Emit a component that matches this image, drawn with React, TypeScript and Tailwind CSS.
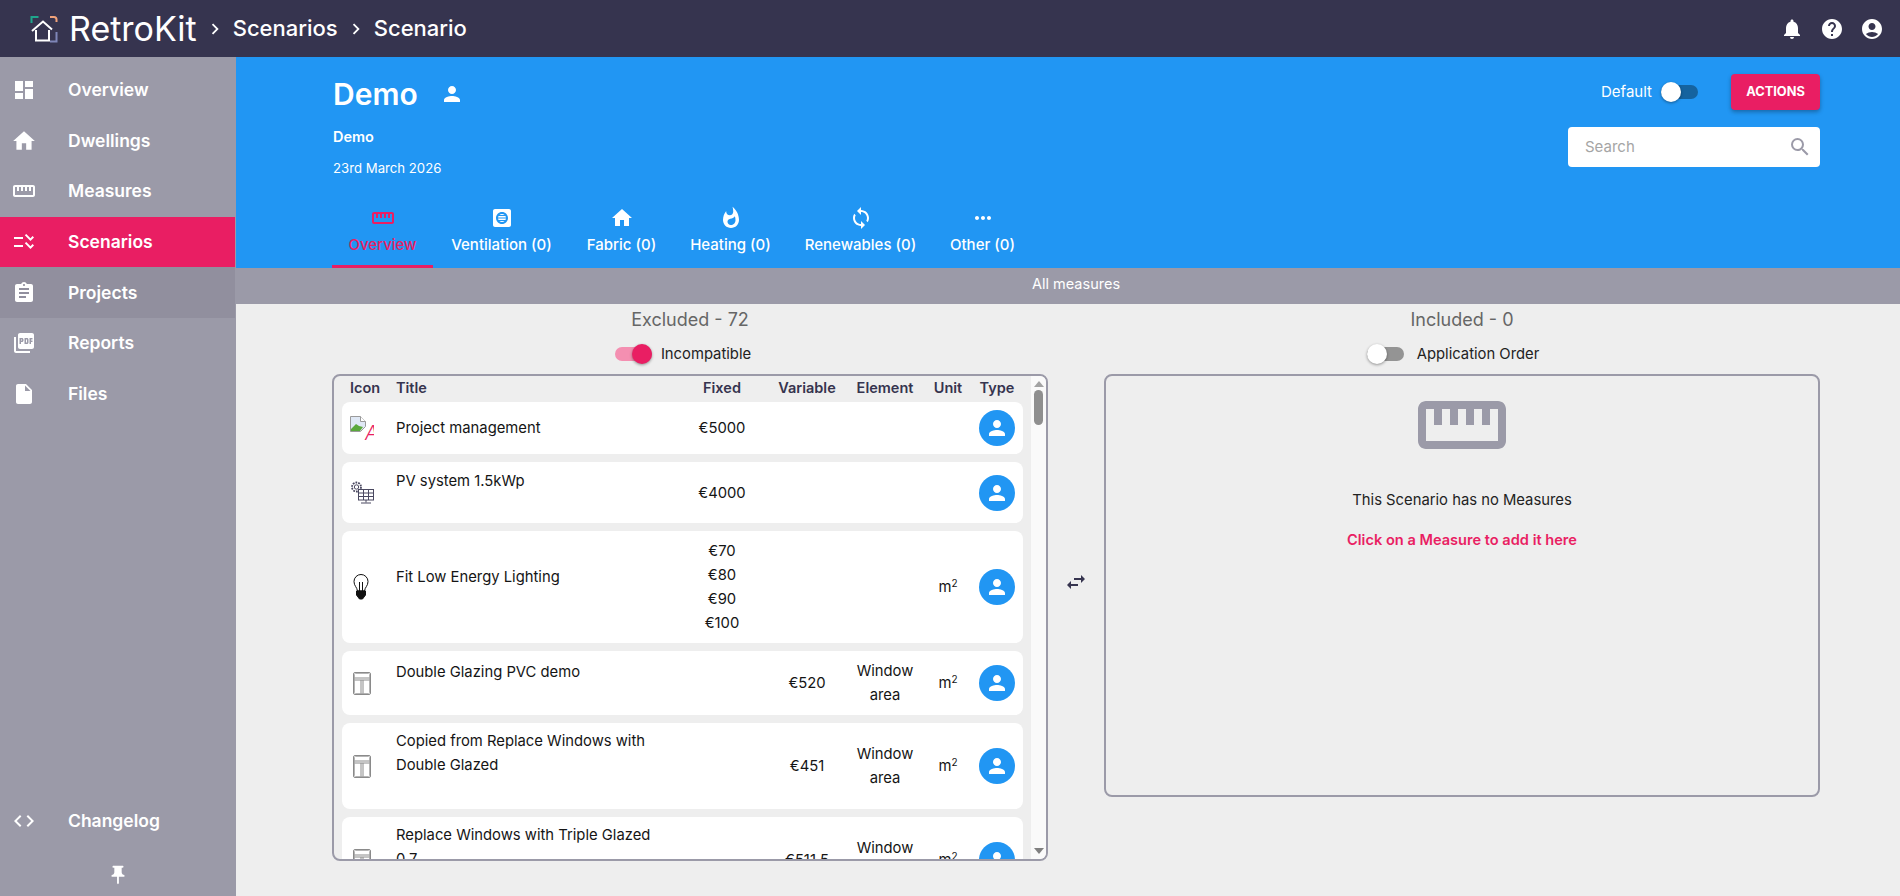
import {
  MdAccountCircle,
  MdAssignment,
  MdChecklist,
  MdCode,
  MdDashboard,
  MdHelp,
  MdHome,
  MdHvac,
  MdInsertDriveFile,
  MdMoreHoriz,
  MdNavigateNext,
  MdNotifications,
  MdPerson,
  MdPictureAsPdf,
  MdPushPin,
  MdSearch,
  MdStraighten,
  MdSwapHoriz,
  MdSync,
  MdWhatshot,
} from "react-icons/md";
import type { ReactNode } from "react";

const navItems = [
  { label: "Overview", icon: <MdDashboard size={24} />, cls: "" },
  { label: "Dwellings", icon: <MdHome size={26} />, cls: "" },
  { label: "Measures", icon: <MdStraighten size={24} />, cls: "" },
  { label: "Scenarios", icon: <MdChecklist size={24} className="-scale-x-100" />, cls: "bg-[#e91e63]" },
  { label: "Projects", icon: <MdAssignment size={24} />, cls: "bg-[#918f9e]" },
  { label: "Reports", icon: <MdPictureAsPdf size={24} />, cls: "" },
  { label: "Files", icon: <MdInsertDriveFile size={24} />, cls: "" },
];

const tabs = [
  { label: "Overview", icon: <MdStraighten size={24} />, cls: "w-[101px] border-[#e91e63] text-[#e91e63]" },
  { label: "Ventilation (0)", icon: <MdHvac size={24} />, cls: "w-[137px] border-transparent text-white" },
  { label: "Fabric (0)", icon: <MdHome size={24} />, cls: "w-[103px] border-transparent text-white" },
  { label: "Heating (0)", icon: <MdWhatshot size={24} />, cls: "w-[115px] border-transparent text-white" },
  { label: "Renewables (0)", icon: <MdSync size={24} />, cls: "w-[145px] border-transparent text-white" },
  { label: "Other (0)", icon: <MdMoreHoriz size={24} />, cls: "w-[99px] border-transparent text-white" },
];

function Logo() {
  return (
    <svg width="28" height="28" viewBox="0 0 28 28" fill="none">
      <path d="M1.500 8V2h7" stroke="#1fa58c" strokeWidth="2" />
      <path d="M20 2h4a2.500 2.500 0 0 1 2.500 2.500V7" stroke="#f0a27a" strokeWidth="2" />
      <path d="M26.500 17v9.500H20" stroke="#7f86b8" strokeWidth="2" />
      <path d="M2 16 13 6.500 22 14.500" stroke="#fff" strokeWidth="2" />
      <path d="M6 15v10.500h13V15" stroke="#fff" strokeWidth="2" />
    </svg>
  );
}

function BrokenImage() {
  return (
    <div className="relative w-6 h-6 self-start mt-[14px] overflow-hidden">
      <svg width="16" height="16" viewBox="0 0 16 16" className="absolute left-0 top-0">
        <path d="M.5.500h10l5 5v5l-5 5h-10z" fill="#dfe8f5" stroke="#9a9a9a" />
        <path d="M1 13 6 8l3 2 4 1-3 4H1z" fill="#5aa83c" />
        <path d="M10.500.500v5h5" fill="#fff" stroke="#9a9a9a" />
      </svg>
      <span className="absolute left-[15px] top-[5px] text-[20px] leading-[24px] font-light italic text-[#e91e63]">
        A
      </span>
    </div>
  );
}

function SolarIcon() {
  return (
    <svg width="25" height="25" viewBox="0 0 25 25" fill="none" stroke="#4a4860" strokeWidth="1">
      <circle cx="6.500" cy="7" r="2.200" />
      <circle cx="6.500" cy="7" r="4.500" strokeDasharray="1.800 1" strokeWidth="1.800" />
      <rect x="8.500" y="9.500" width="15" height="10.500" fill="#fff" />
      <path d="M8.500 13h15M8.500 16.500h15M13.500 9.500V20M18.500 9.500V20M16 20v2.500M11 23h10" />
    </svg>
  );
}

function BulbIcon() {
  return (
    <svg width="16" height="26" viewBox="0 0 16 26" fill="none" stroke="#111" strokeWidth="1">
      <path d="M4.500 17C4 13 1 12 1 7.500a7 7 0 0 1 14 0C15 12 12 13 11.500 17z" />
      <path d="M6.500 17V8M9.500 17V8" />
      <path d="M3.500 17h9v4l-3 4h-3l-3-4z" fill="#111" />
    </svg>
  );
}

function WindowIcon() {
  return (
    <svg width="18" height="23" viewBox="0 0 18 23" fill="none" stroke="#8a8a8a" strokeWidth="1">
      <rect x="0.500" y="0.500" width="17" height="22" rx="1.500" />
      <rect x="1.500" y="1.500" width="15" height="20" rx="1" stroke="#b5b5b5" />
      <path d="M1.500 6h15M1.500 8h15M8 8v13.500M10 8v13.500" />
    </svg>
  );
}

function Toggle({ track, thumb, on }: { track: string; thumb: string; on?: boolean }) {
  return (
    <div className="relative w-[37px] h-5 shrink-0 flex items-center">
      <div className={`w-full h-[14px] rounded-full ${track}`} />
      <div
        className={`absolute top-0 w-5 h-5 rounded-full shadow-[0_1px_3px_rgba(0,0,0,0.4)] ${thumb} ${on ? "right-0" : "left-0"}`}
      />
    </div>
  );
}

interface Measure {
  title: string[];
  icon: ReactNode;
  height: string;
  titlePad: string;
  fixed?: string[];
  variable?: string;
  element?: boolean;
  unit?: boolean;
}

const measures: Measure[] = [
  {
    title: ["Project management"],
    icon: <BrokenImage />,
    height: "h-[52px]",
    titlePad: "pt-[14px]",
    fixed: ["€5000"],
  },
  {
    title: ["PV system 1.5kWp"],
    icon: <SolarIcon />,
    height: "h-[61px]",
    titlePad: "pt-[7px]",
    fixed: ["€4000"],
  },
  {
    title: ["Fit Low Energy Lighting"],
    icon: <div className="ml-[3px] flex"><BulbIcon /></div>,
    height: "h-[112px]",
    titlePad: "pt-[34px]",
    fixed: ["€70", "€80", "€90", "€100"],
    unit: true,
  },
  {
    title: ["Double Glazing PVC demo"],
    icon: <div className="ml-[3px] flex"><WindowIcon /></div>,
    height: "h-[64px]",
    titlePad: "pt-[9px]",
    variable: "€520",
    element: true,
    unit: true,
  },
  {
    title: ["Copied from Replace Windows with", "Double Glazed"],
    icon: <div className="ml-[3px] flex"><WindowIcon /></div>,
    height: "h-[86px]",
    titlePad: "pt-[6px]",
    variable: "€451",
    element: true,
    unit: true,
  },
  {
    title: ["Replace Windows with Triple Glazed", "0.7"],
    icon: <div className="ml-[3px] flex"><WindowIcon /></div>,
    height: "h-[86px]",
    titlePad: "pt-[6px]",
    variable: "€511.5",
    element: true,
    unit: true,
  },
];

const gridCols = "grid grid-cols-[54px_284px_84px_86px_70px_56px_47px]";

function MeasureRow({ m }: { m: Measure }) {
  return (
    <div className={`${gridCols} ${m.height} shrink-0 items-center bg-white rounded-lg text-[14.8px] leading-6 text-[#151515]`}>
      <div className="pl-2 flex items-center h-full">{m.icon}</div>
      <div className={`self-start ${m.titlePad}`}>
        {m.title.map((line) => (
          <div key={line} className="whitespace-nowrap">{line}</div>
        ))}
      </div>
      <div className="text-center">
        {m.fixed?.map((f) => <div key={f}>{f}</div>)}
      </div>
      <div className="text-center">{m.variable}</div>
      <div className="text-center">{m.element && <>Window<br />area</>}</div>
      <div className="text-center">{m.unit && <>m<sup className="text-[10px]">2</sup></>}</div>
      <div className="flex justify-center pr-[5px]">
        <div className="w-9 h-9 rounded-full bg-[#2196f3] flex items-center justify-center text-white">
          <MdPerson size={24} />
        </div>
      </div>
    </div>
  );
}

function MeasureTable() {
  return (
    <div className="h-[487px] border-2 border-[#9b9aa8] rounded-lg flex overflow-hidden">
      <div className="w-[689px] pl-2 flex flex-col overflow-hidden">
        <div className={`${gridCols} h-[26px] pb-[2px] shrink-0 items-center text-[14.5px] font-semibold text-[#36344f]`}>
          <div className="pl-2">Icon</div>
          <div>Title</div>
          <div className="text-center">Fixed</div>
          <div className="text-center">Variable</div>
          <div className="text-center">Element</div>
          <div className="text-center">Unit</div>
          <div className="text-center pr-[5px]">Type</div>
        </div>
        <div className="flex flex-col gap-2">
          {measures.map((m) => (
            <MeasureRow key={m.title[0]} m={m} />
          ))}
        </div>
      </div>
      <div className="ml-2 w-[15px] bg-[#fafafa] flex flex-col items-center pt-[5px] pb-[5px]">
        <div className="w-0 h-0 border-x-[5px] border-x-transparent border-b-[6px] border-b-[#a3a3a3]" />
        <div className="w-[9px] h-[35px] mt-[3px] rounded-full bg-[#8f8f8f]" />
        <div className="mt-auto w-0 h-0 border-x-[5px] border-x-transparent border-t-[6px] border-t-[#808080]" />
      </div>
    </div>
  );
}

export default function App() {
  return (
    <div className="w-[1900px] h-[896px] flex flex-col overflow-hidden bg-[#eeeeee] font-['Inter',sans-serif]">
      <header className="h-[57px] shrink-0 bg-[#36344f] text-white flex items-center pl-[30px] pr-4">
        <Logo />
        <span className="ml-[11px] text-[34px] font-normal leading-none">RetroKit</span>
        <MdNavigateNext size={22} className="ml-[7px]" />
        <span className="ml-[7px] text-[22px] font-medium">Scenarios</span>
        <MdNavigateNext size={22} className="ml-[7px]" />
        <span className="ml-[7px] text-[22px] font-medium">Scenario</span>
        <div className="ml-auto flex gap-4">
          <MdNotifications size={24} />
          <MdHelp size={24} />
          <MdAccountCircle size={24} />
        </div>
      </header>

      <div className="flex flex-1 min-h-0">
        <aside className="w-[236px] shrink-0 bg-[#9b9aa8] text-white flex flex-col pt-2 border-r border-[#9b9aa8]">
          {navItems.map((item) => (
            <div key={item.label} className={`h-[50.6px] flex items-center ${item.cls}`}>
              <div className="w-[48px] flex justify-center">{item.icon}</div>
              <span className="ml-5 text-[17.500px] font-semibold">{item.label}</span>
            </div>
          ))}
          <div className="mt-auto mb-2 h-[50px] flex items-center">
            <div className="w-[48px] flex justify-center"><MdCode size={24} /></div>
            <span className="ml-5 text-[17.500px] font-semibold">Changelog</span>
          </div>
          <div className="h-[42px] flex items-center justify-center">
            <MdPushPin size={22} />
          </div>
        </aside>

        <main className="flex-1 min-w-0 flex flex-col">
          <section className="h-[211px] shrink-0 bg-[#2196f3] text-white pl-[97px] pr-[80px] flex flex-col">
            <div className="flex-1 flex justify-between pt-[17px]">
              <div>
                <div className="flex items-center h-10">
                  <h1 className="text-[30px] font-semibold leading-10">Demo</h1>
                  <MdPerson size={24} className="ml-[22px]" />
                </div>
                <div className="mt-[13px] text-[14.5px] font-semibold leading-5">Demo</div>
                <div className="mt-[11px] text-[13.2px] leading-5">23rd March 2026</div>
              </div>
              <div className="flex flex-col items-end">
                <div className="flex items-center h-9">
                  <span className="text-[15px]">Default</span>
                  <div className="ml-[9px]">
                    <Toggle track="bg-[#15639f]" thumb="bg-white" />
                  </div>
                  <button className="ml-[33px] w-[89px] h-9 rounded bg-[#e91e63] text-[12.8px] font-bold shadow-[0_2px_4px_rgba(0,0,0,0.3)]">
                    ACTIONS
                  </button>
                </div>
                <div className="mt-[17px] w-[252px] h-10 bg-white rounded flex items-center pl-[17px] pr-2">
                  <input
                    placeholder="Search"
                    className="flex-1 min-w-0 text-[15px] outline-none placeholder:text-[#a5a5a5]"
                  />
                  <MdSearch size={24} className="text-[#9b9aa8]" />
                </div>
              </div>
            </div>
            <nav className="flex h-[67px] -ml-px">
              {tabs.map((tab) => (
                <div
                  key={tab.label}
                  className={`pt-[5px] border-b-[3px] flex flex-col items-center ${tab.cls}`}
                >
                  {tab.icon}
                  <span className="mt-1 text-[15px] font-medium whitespace-nowrap">{tab.label}</span>
                </div>
              ))}
            </nav>
          </section>

          <div className="h-9 shrink-0 bg-[#9b9aa8] text-white text-[14.5px] pl-[96px] pr-[80px] pb-1 flex items-center justify-center">
            All measures
          </div>

          <div className="flex-1 min-h-0 pl-[96px] pr-[80px] grid grid-cols-[716px_56px_716px]">
            <div>
              <div className="h-[34px] pt-[4px] text-center text-[18px] leading-[24px] text-[#666]">Excluded - 72</div>
              <div className="h-9 pb-1 pr-[14px] flex items-center justify-center">
                <Toggle track="bg-[#f48fb1]" thumb="bg-[#e91e63]" on />
                <span className="ml-[9px] text-[14.8px] text-[#222]">Incompatible</span>
              </div>
              <MeasureTable />
            </div>

            <div className="pt-[266px] flex justify-center text-[#36344f]">
              <MdSwapHoriz size={24} />
            </div>

            <div>
              <div className="h-[34px] pt-[4px] text-center text-[18px] leading-[24px] text-[#666]">Included - 0</div>
              <div className="h-9 pb-1 pr-[18px] flex items-center justify-center">
                <Toggle track="bg-[#949494]" thumb="bg-white" />
                <span className="ml-[13px] text-[14.8px] text-[#222]">Application Order</span>
              </div>
              <div className="h-[423px] border-2 border-[#9b9aa8] rounded-lg flex flex-col items-center">
                <MdStraighten size={96} className="mt-[1px] text-[#9b9aa8]" />
                <div className="mt-[15px] text-[14.8px] leading-6 text-[#222]">This Scenario has no Measures</div>
                <div className="mt-[16px] text-[14.6px] leading-6 font-semibold text-[#e91e63]">Click on a Measure to add it here</div>
              </div>
            </div>
          </div>
        </main>
      </div>
    </div>
  );
}
